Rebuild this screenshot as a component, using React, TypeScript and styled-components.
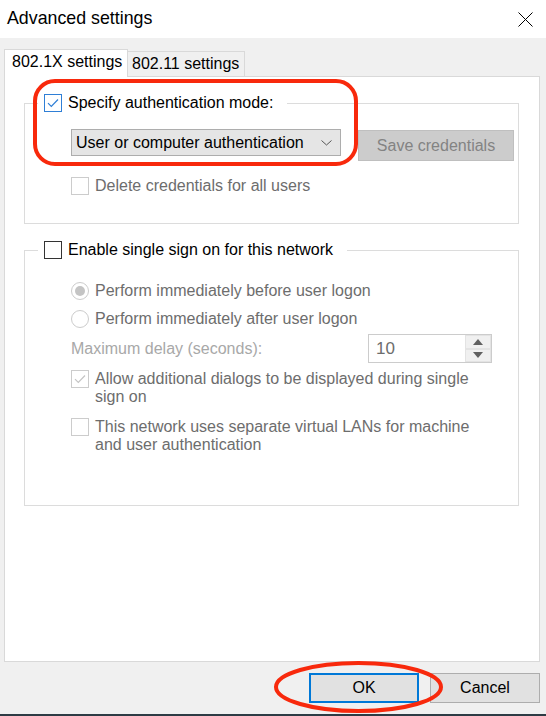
import React, { FC } from 'react';
import styled, { createGlobalStyle } from 'styled-components';

const GlobalStyle = createGlobalStyle`
  html, body {
    margin: 0;
    padding: 0;
    background: #f0f0f0;
    overflow: hidden;
  }
  body {
    font-family: "Liberation Sans", Arial, sans-serif;
    font-size: 16px;
    color: #000;
  }
`;

const Window = styled.div`
  position: relative;
  width: 546px;
  height: 716px;
  display: flex;
  flex-direction: column;
  background: #f0f0f0;
`;

const TitleBar = styled.div`
  height: 38px;
  flex: none;
  display: flex;
  align-items: center;
  justify-content: space-between;
  padding: 0 13px 0 7px;
  background: #fff;
  box-sizing: border-box;
`;

const Title = styled.span`
  font-size: 17.8px;
  margin-top: -2px;
`;

const Content = styled.div`
  flex: 1;
  display: flex;
  flex-direction: column;
  padding: 11px 6px 0 4px;
`;

const TabStrip = styled.div`
  position: relative;
  z-index: 1;
  height: 28px;
  margin-bottom: -1px;
  display: flex;
  align-items: flex-end;
`;

const Tab = styled.div<{ $active?: boolean }>`
  box-sizing: border-box;
  height: ${({ $active }) => ($active ? 28 : 25)}px;
  margin-bottom: ${({ $active }) => ($active ? 0 : 1)}px;
  padding: ${({ $active }) => ($active ? '0 0 3px 7px' : '0 0 0 4px')};
  width: ${({ $active }) => ($active ? 124 : 117)}px;
  background: ${({ $active }) => ($active ? '#fff' : '#f0f0f0')};
  border: 1px solid #d9d9d9;
  border-bottom: none;
  border-left: ${({ $active }) => ($active ? '1px solid #d9d9d9' : 'none')};
  display: flex;
  align-items: center;
  white-space: nowrap;
`;

const TabPage = styled.div`
  box-sizing: border-box;
  height: 586px;
  background: #fff;
  border: 1px solid #d9d9d9;
  padding: 0 20px 0 19px;
`;

const Group = styled.fieldset`
  margin: 16px 0 0;
  padding: 0;
  min-width: 0;
  border: 1px solid #dcdcdc;
`;

const Legend = styled.legend`
  margin-left: 13px;
  padding: 0 14px 0 6px;
  height: 20px;
  display: flex;
  align-items: center;
  gap: 6px;
`;

const GroupBody = styled.div<{ $top: number; $bottom: number }>`
  display: flex;
  flex-direction: column;
  padding: ${({ $top, $bottom }) => `${$top}px 0 ${$bottom}px 46px`};
`;

const Row = styled.div<{ $gap?: number }>`
  display: flex;
  align-items: flex-start;
  margin-top: ${({ $gap }) => $gap ?? 0}px;
`;

const Option = styled.div<{ $gap?: number }>`
  display: flex;
  align-items: flex-start;
  gap: 6px;
  margin-top: ${({ $gap }) => $gap ?? 0}px;
  padding-right: 36px;
`;

const OptionText = styled.span<{ $disabled?: boolean }>`
  line-height: 18px;
  color: ${({ $disabled }) => ($disabled ? '#6d6d6d' : '#000')};
`;

const Box = styled.span<{ $tone: 'blue' | 'black' | 'grey' }>`
  box-sizing: border-box;
  flex: none;
  width: 18px;
  height: 18px;
  background: #fff;
  border: 1px solid ${({ $tone }) => ($tone === 'blue' ? '#2f7fd6' : $tone === 'black' ? '#333' : '#cccccc')};
  display: flex;
  align-items: center;
  justify-content: center;
`;

const Radio = styled.span<{ $on?: boolean }>`
  box-sizing: border-box;
  flex: none;
  width: 18px;
  height: 18px;
  border-radius: 50%;
  border: 1px solid #cccccc;
  display: flex;
  align-items: center;
  justify-content: center;
  &::after {
    content: '';
    width: 10px;
    height: 10px;
    border-radius: 50%;
    background: ${({ $on }) => ($on ? '#c4c4c4' : 'transparent')};
  }
`;

const Select = styled.div`
  box-sizing: border-box;
  width: 270px;
  height: 27px;
  background: #e5e5e5;
  border: 1px solid #adadad;
  display: flex;
  align-items: center;
  justify-content: space-between;
  padding: 0 8px 0 4px;
  white-space: nowrap;
`;

const Button = styled.div<{ $width: number; $kind?: 'default' | 'disabled' }>`
  box-sizing: border-box;
  width: ${({ $width }) => $width}px;
  height: 31px;
  display: flex;
  align-items: center;
  justify-content: center;
  background: ${({ $kind }) => ($kind === 'disabled' ? '#cccccc' : '#e1e1e1')};
  color: ${({ $kind }) => ($kind === 'disabled' ? '#838383' : '#000')};
  border: ${({ $kind }) => ($kind === 'default' ? '2px solid #0078d7' : $kind === 'disabled' ? '1px solid #bfbfbf' : '1px solid #adadad')};
`;

const SaveButton = styled(Button)`
  margin: 1px 0 0 17px;
`;

const DelayRow = styled.div`
  display: flex;
  align-items: center;
  justify-content: space-between;
  margin-top: 6px;
  padding-right: 26px;
`;

const DelayLabel = styled.span`
  color: #a8a8a8;
`;

const Spin = styled.div`
  box-sizing: border-box;
  width: 124px;
  height: 29px;
  border: 1px solid #cccccc;
  display: flex;
`;

const SpinValue = styled.span`
  flex: 1;
  padding-left: 7px;
  display: flex;
  align-items: center;
  color: #6d6d6d;
  font-size: 17px;
`;

const SpinButtons = styled.div`
  width: 26px;
  display: flex;
  flex-direction: column;
`;

const SpinButton = styled.div`
  flex: 1;
  background: #f0f0f0;
  border: 1px solid #e3e3e3;
  display: flex;
  align-items: center;
  justify-content: center;
`;

const Footer = styled.div`
  display: flex;
  justify-content: flex-end;
  gap: 11px;
  padding: 11px 0 11px;
  & > div {
    height: 30px;
  }
`;

const BottomEdge = styled.div`
  height: 2px;
  background: #2d3b44;
`;

const Markup = styled.svg`
  position: absolute;
  left: 0;
  top: 0;
  pointer-events: none;
`;

const Check: FC<{ color: string }> = ({ color }) => (
  <svg width="12" height="10" viewBox="0 0 12 10">
    <path d="M1 5.2 L4.3 8.5 L11 1.5" fill="none" stroke={color} strokeWidth="1.2" />
  </svg>
);

const App: FC = () => (
  <Window>
    <GlobalStyle />
    <TitleBar>
      <Title>Advanced settings</Title>
      <svg width="15" height="15" viewBox="0 0 15 15">
        <path d="M0.5 0.5 L14.5 14.5 M14.5 0.5 L0.5 14.5" stroke="#000" strokeWidth="1" />
      </svg>
    </TitleBar>
    <Content>
      <TabStrip>
        <Tab $active>802.1X settings</Tab>
        <Tab>802.11 settings</Tab>
      </TabStrip>
      <TabPage>
        <Group>
          <Legend>
            <Box $tone="blue"><Check color="#2f7fd6" /></Box>
            <span>Specify authentication mode:</span>
          </Legend>
          <GroupBody $top={16} $bottom={28}>
            <Row>
              <Select>
                <span>User or computer authentication</span>
                <svg width="11" height="6" viewBox="0 0 11 6">
                  <path d="M0.5 0.5 L5.5 5 L10.5 0.5" fill="none" stroke="#555" strokeWidth="1" />
                </svg>
              </Select>
              <SaveButton $width={156} $kind="disabled">Save credentials</SaveButton>
            </Row>
            <Option $gap={16}>
              <Box $tone="grey" />
              <OptionText $disabled>Delete credentials for all users</OptionText>
            </Option>
          </GroupBody>
        </Group>
        <Group>
          <Legend>
            <Box $tone="black" />
            <span>Enable single sign on for this network</span>
          </Legend>
          <GroupBody $top={22} $bottom={51}>
            <Option>
              <Radio $on />
              <OptionText $disabled>Perform immediately before user logon</OptionText>
            </Option>
            <Option $gap={10}>
              <Radio />
              <OptionText $disabled>Perform immediately after user logon</OptionText>
            </Option>
            <DelayRow>
              <DelayLabel>Maximum delay (seconds):</DelayLabel>
              <Spin>
                <SpinValue>10</SpinValue>
                <SpinButtons>
                  <SpinButton>
                    <svg width="10" height="6" viewBox="0 0 10 6"><path d="M0 6 L5 0 L10 6 Z" fill="#606060" /></svg>
                  </SpinButton>
                  <SpinButton>
                    <svg width="10" height="6" viewBox="0 0 10 6"><path d="M0 0 L10 0 L5 6 Z" fill="#606060" /></svg>
                  </SpinButton>
                </SpinButtons>
              </Spin>
            </DelayRow>
            <Option $gap={7}>
              <Box $tone="grey"><Check color="#c4c4c4" /></Box>
              <OptionText $disabled>Allow additional dialogs to be displayed during single sign on</OptionText>
            </Option>
            <Option $gap={12}>
              <Box $tone="grey" />
              <OptionText $disabled>This network uses separate virtual LANs for machine and user authentication</OptionText>
            </Option>
          </GroupBody>
        </Group>
      </TabPage>
      <Footer>
        <Button $width={110} $kind="default">OK</Button>
        <Button $width={110}>Cancel</Button>
      </Footer>
    </Content>
    <BottomEdge />
    <Markup width="546" height="716" viewBox="0 0 546 716">
      <rect x="35" y="81" width="321" height="83" rx="20" fill="none" stroke="#f8290c" strokeWidth="4" />
      <ellipse cx="358.5" cy="687" rx="82.5" ry="24" fill="none" stroke="#f8290c" strokeWidth="4" />
    </Markup>
  </Window>
);

export default App;
